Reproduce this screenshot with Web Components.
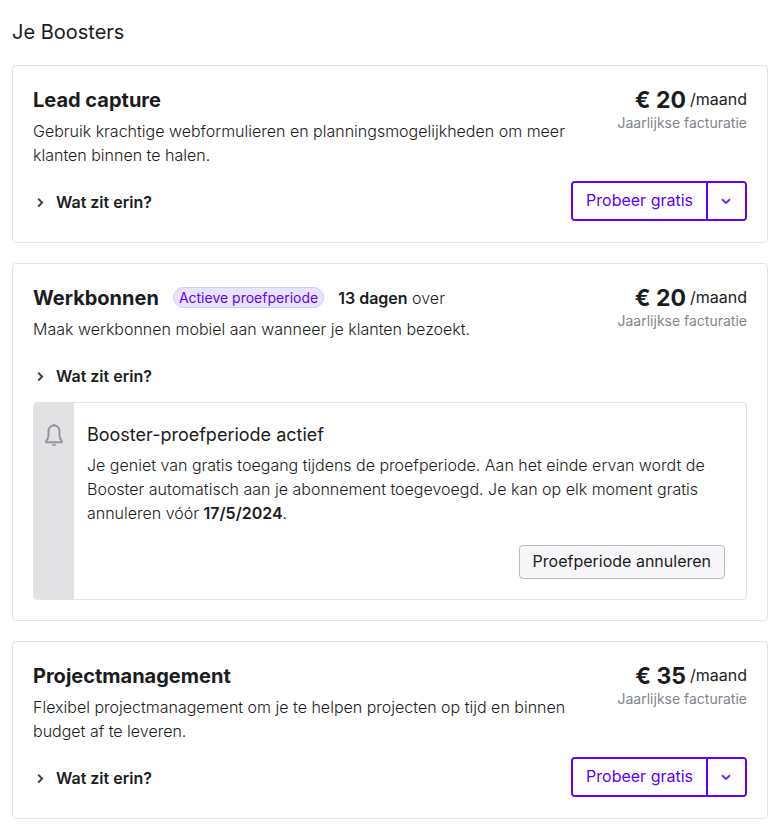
<!DOCTYPE html>
<html lang="nl">
<head>
<meta charset="utf-8">
<meta name="viewport" content="width=device-width, initial-scale=1">
<title>Je Boosters</title>
<style>
  body {
    margin: 0;
    padding: 0 10px 12px 12px;
    background: #fff;
    color: #1a1c20;
    font: 300 16px/24px Inter, "Liberation Sans", sans-serif;
    --accent: #6000ff;
    --line: #e4e4e6;
  }
  b { font-weight: 600; }
</style>
</head>
<body>
<booster-list heading="Je Boosters">
  <booster-card name="Lead capture" price="€ 20">
    Gebruik krachtige webformulieren en planningsmogelijkheden om meer klanten binnen te halen.
    <split-button slot="action">Probeer gratis</split-button>
  </booster-card>
  <booster-card name="Werkbonnen" price="€ 20">
    <status-pill slot="status">Actieve proefperiode</status-pill>
    <span slot="status"><b>13 dagen</b> over</span>
    Maak werkbonnen mobiel aan wanneer je klanten bezoekt.
    <trial-notice slot="notice" heading="Booster-proefperiode actief" action="Proefperiode annuleren">Je geniet van gratis toegang tijdens de proefperiode. Aan het einde ervan wordt de Booster automatisch aan je abonnement toegevoegd. Je kan op elk moment gratis annuleren vóór <b>17/5/2024</b>.</trial-notice>
  </booster-card>
  <booster-card name="Projectmanagement" price="€ 35">
    Flexibel projectmanagement om je te helpen projecten op tijd en binnen budget af te leveren.
    <split-button slot="action">Probeer gratis</split-button>
  </booster-card>
</booster-list>

<script>
class BaseElement extends HTMLElement {
  connectedCallback() {
    if (this.shadowRoot) return;
    this.attachShadow({ mode: "open" }).innerHTML = this.render();
  }
}

customElements.define("booster-list", class extends BaseElement {
  render() {
    return `<style>
      :host { display: flex; flex-direction: column; gap: 20px; }
      h1 { margin: 0; padding: 19px 0 0; font-size: 20px; line-height: 26px; font-weight: 400; }
    </style>
    <h1>${this.getAttribute("heading")}</h1>
    <slot></slot>`;
  }
});

customElements.define("booster-card", class extends BaseElement {
  render() {
    return `<style>
      :host { display: block; border: 1px solid var(--line); border-radius: 4px; padding: 20px; }
      .top { display: grid; grid-template-columns: 1fr auto; column-gap: 20px; }
      .title { display: flex; align-items: center; gap: 14px; height: 27px; margin-bottom: 6px; }
      h2 { align-self: flex-start; margin: 0; font-size: 20px; line-height: 28px; font-weight: 700; }
      p { margin: 0; }
      .price { text-align: right; }
      .amount { display: flex; justify-content: flex-end; gap: 4px; height: 27px; font-weight: 400; line-height: 26px; }
      .amount strong { font-size: 23px; line-height: 28px; font-weight: 700; }
      .billing { font-size: 14px; line-height: 20px; font-weight: 400; color: #82858e; }
      .row { display: flex; justify-content: space-between; align-items: flex-start; min-height: 41px; margin-top: 14px; }
      .toggle { display: flex; align-items: center; gap: 8px; height: 41px; padding: 1px 0 0; border: 0; background: none; color: inherit;
        font: 600 16px/24px Inter, sans-serif; cursor: pointer; }
      ::slotted(trial-notice) { margin-top: 6px; }
    </style>
    <div class="top">
      <div>
        <div class="title"><h2>${this.getAttribute("name")}</h2><slot name="status"></slot></div>
        <p><slot></slot></p>
      </div>
      <div class="price">
        <div class="amount"><strong>${this.getAttribute("price")}</strong><span>/maand</span></div>
        <div class="billing">Jaarlijkse facturatie</div>
      </div>
    </div>
    <div class="row">
      <button class="toggle" type="button" aria-expanded="false">
        <svg width="15" height="16" viewBox="0 0 15 16" fill="none" stroke="#3e4046" stroke-width="2" aria-hidden="true"><path d="M5.2 4.7 9.1 8.6 5.2 12.5"/></svg>
        <span>Wat zit erin?</span>
      </button>
      <slot name="action"></slot>
    </div>
    <slot name="notice"></slot>`;
  }
});

customElements.define("status-pill", class extends BaseElement {
  render() {
    return `<style>
      :host { display: block; box-sizing: border-box; height: 21px; padding: 0 5px; border: 1px solid #d5c9fb; border-radius: 11px;
        background: #e9e5fe; color: var(--accent); font-size: 14px; line-height: 19px; font-weight: 400; }
    </style><slot></slot>`;
  }
});

customElements.define("split-button", class extends BaseElement {
  render() {
    return `<style>
      :host { display: flex; box-sizing: border-box; height: 40px; border: 2px solid var(--accent); border-radius: 4px; }
      button { margin: 0; border: 0; background: #fff; color: var(--accent); font: 400 16px/24px Inter, sans-serif; cursor: pointer; border-radius: 2px; }
      .main { padding: 0 13px 2px; }
      .more { display: flex; align-items: center; justify-content: center; width: 39px; padding: 0 2px 0 0;
        border-left: 2px solid var(--accent); border-radius: 0 2px 2px 0; }
    </style>
    <button class="main" type="button"><slot></slot></button>
    <button class="more" type="button" aria-label="Meer opties">
      <svg width="12" height="12" viewBox="0 0 12 12" fill="none" stroke="#6f24ff" stroke-width="2" aria-hidden="true"><path d="M2 4.3 6 8 10 4.3"/></svg>
    </button>`;
  }
});

customElements.define("trial-notice", class extends BaseElement {
  render() {
    return `<style>
      :host { display: flex; border: 1px solid var(--line); border-radius: 4px; overflow: hidden; }
      .side { flex: none; width: 40px; padding: 20px 1px 0 0; background: #e2e2e5; text-align: center; box-sizing: border-box; }
      .content { flex: 1; padding: 20px 21px 20px 13px; }
      h3 { margin: 0 0 6px; font-size: 18px; line-height: 24px; font-weight: 400; }
      p { margin: 0 0 20px; }
      .actions { display: flex; justify-content: flex-end; }
      button { height: 34px; padding: 0 13px 2px; border: 1px solid #b9bac0; border-radius: 4px; background: #f7f7fa; color: inherit;
        font: 400 16px/24px Inter, sans-serif; cursor: pointer; }
    </style>
    <div class="side">
      <svg width="20" height="24" viewBox="0 0 20 24" fill="none" aria-hidden="true">
        <path d="M10 2.6C6.6 2.6 4.5 5 4.5 8.3V12.5C4.5 14.8 3.7 16.1 2.2 17.8V19.3H17.8V17.8C16.3 16.1 15.5 14.8 15.5 12.5V8.3C15.5 5 13.4 2.6 10 2.6Z" stroke="#93949d" stroke-width="2" stroke-linejoin="round"/>
        <path d="M8.4 2.6C8.4.2 11.6.2 11.6 2.6ZM7.5 21.3H12.5C12.1 23.6 7.9 23.6 7.5 21.3Z" fill="#93949d"/>
      </svg>
    </div>
    <div class="content">
      <h3>${this.getAttribute("heading")}</h3>
      <p><slot></slot></p>
      <div class="actions"><button type="button">${this.getAttribute("action")}</button></div>
    </div>`;
  }
});
</script>
</body>
</html>
